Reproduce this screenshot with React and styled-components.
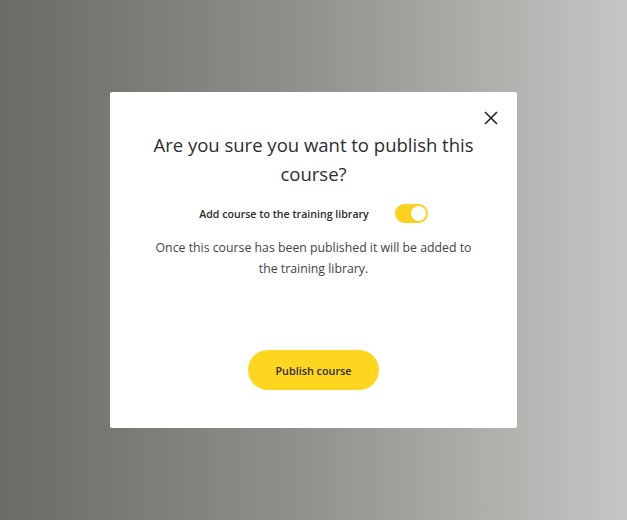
import React, { useState } from "react";
import styled, { createGlobalStyle } from "styled-components";

const GlobalStyle = createGlobalStyle`
  html, body {
    margin: 0;
    padding: 0;
  }
  body {
    font-family: "Open Sans", "Noto Sans", sans-serif;
  }
`;

function App() {
  const [inLibrary, setInLibrary] = useState(true);
  return (
    <>
      <GlobalStyle />
      <Backdrop>
        <Modal>
          <CloseButton aria-label="Close">
            <svg width="16" height="16" viewBox="0 0 16 16">
              <path d="M2 2 L14 14 M14 2 L2 14" stroke="#222" strokeWidth="1.6" />
            </svg>
          </CloseButton>
          <Title>Are you sure you want to publish this course?</Title>
          <ToggleRow>
            <ToggleLabel>Add course to the training library</ToggleLabel>
            <Switch on={inLibrary} onClick={() => setInLibrary(!inLibrary)}>
              <Knob on={inLibrary} />
            </Switch>
          </ToggleRow>
          <Description>
            Once this course has been published it will be added to the training library.
          </Description>
          <PublishButton>Publish course</PublishButton>
        </Modal>
      </Backdrop>
    </>
  );
}

export default App;

const Backdrop = styled.div`
  width: 627px;
  height: 520px;
  background: linear-gradient(90deg, #6b6a65 0%, #92938e 50%, #c4c6c3 100%);
  display: flex;
  align-items: flex-start;
  justify-content: center;
  padding-top: 92px;
  box-sizing: border-box;
`;

const Modal = styled.div`
  position: relative;
  width: 407px;
  height: 336px;
  background: #fff;
  border-radius: 2px;
  display: flex;
  flex-direction: column;
  align-items: center;
  padding: 38px 30px 0;
  box-sizing: border-box;
`;

const CloseButton = styled.button`
  position: absolute;
  top: 18px;
  right: 18px;
  border: none;
  background: transparent;
  padding: 0;
  width: 16px;
  height: 16px;
  cursor: pointer;
`;

const Title = styled.h2`
  margin: 0;
  font-size: 18.5px;
  font-weight: 400;
  line-height: 29px;
  color: #2e2e2e;
  text-align: center;
  max-width: 330px;
`;

const ToggleRow = styled.div`
  display: flex;
  align-items: center;
  gap: 26px;
  margin-top: 16px;
`;

const ToggleLabel = styled.span`
  font-size: 10.6px;
  font-weight: 600;
  color: #2b2b2b;
`;

const Switch = styled.div`
  width: 33px;
  height: 19px;
  border-radius: 10px;
  background: ${(p) => (p.on ? "#fdd21f" : "#ccc")};
  position: relative;
  cursor: pointer;
`;

const Knob = styled.div`
  position: absolute;
  top: 2px;
  left: ${(p) => (p.on ? "16px" : "2px")};
  width: 15px;
  height: 15px;
  border-radius: 50%;
  background: #fff;
`;

const Description = styled.p`
  margin: 14px 0 0;
  font-size: 12.3px;
  line-height: 21px;
  color: #444;
  text-align: center;
  max-width: 330px;
`;

const PublishButton = styled.button`
  margin-top: 71px;
  width: 131px;
  height: 40px;
  border: none;
  border-radius: 20px;
  background: #ffd61f;
  font-family: "Open Sans", "Noto Sans", sans-serif;
  font-size: 10.8px;
  font-weight: 600;
  color: #2b2b2b;
  cursor: pointer;
`;
